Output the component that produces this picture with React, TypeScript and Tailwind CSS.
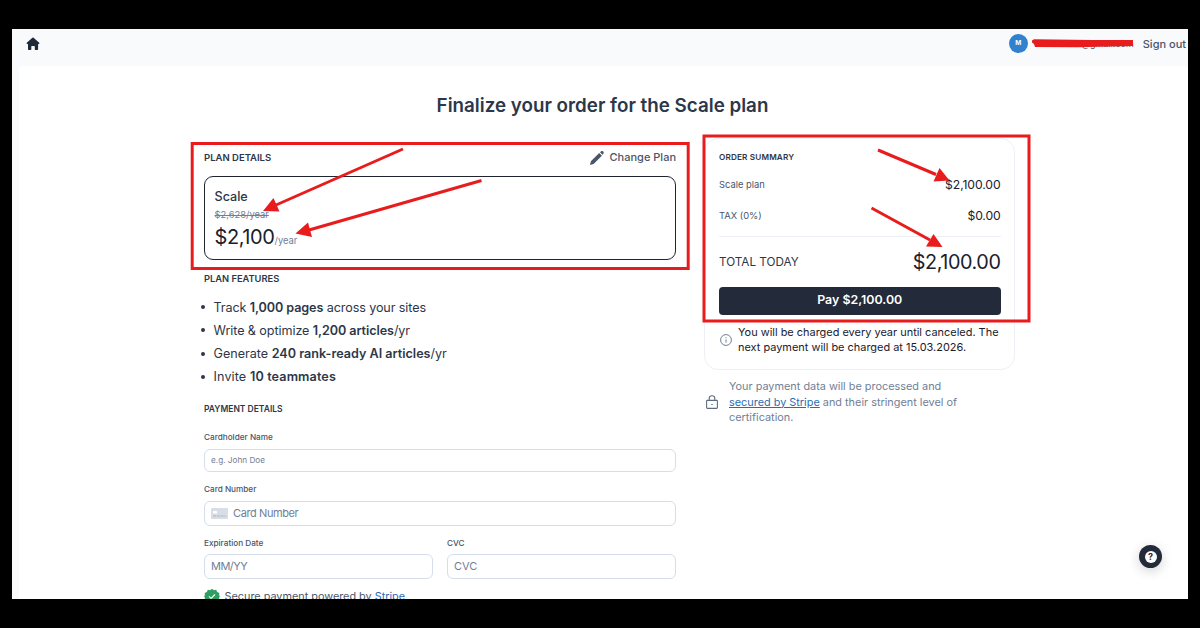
import type { ReactNode } from "react";

const features: { before: string; strong: string; after: string; tracking: string }[] = [
  { before: "Track ", strong: "1,000 pages", after: " across your sites", tracking: "tracking-[-0.1px]" },
  { before: "Write & optimize ", strong: "1,200 articles", after: "/yr", tracking: "tracking-[-0.08px]" },
  { before: "Generate ", strong: "240 rank-ready AI articles", after: "/yr", tracking: "tracking-normal" },
  { before: "Invite ", strong: "10 teammates", after: "", tracking: "tracking-[0.12px]" },
];

function Label({ children }: { children: ReactNode }) {
  return <div className="h-3 text-[8.2px] leading-3 font-medium text-[#4a5568]">{children}</div>;
}

function Header() {
  return (
    <header className="flex h-[37px] shrink-0 items-start pl-[14px] pr-[2px]">
      <svg viewBox="0 0 14 14" className="mt-2 size-[14px]" fill="#1f2937">
        <path d="M6.4.8a.9.9 0 0 1 1.2 0l5.600 5c.5.5.2 1.200-.4 1.200h-.7v5.100c0 .6-.4 1-1 1H9.300c-.3 0-.5-.2-.5-.5V9.500c0-.3-.2-.5-.5-.5H5.800c-.3 0-.5.2-.5.5v3.100c0 .3-.2.5-.5.5H3c-.6 0-1-.4-1-1V7h-.8C.6 7 .3 6.300.8 5.800z" />
      </svg>
      <div className="ml-auto flex items-center pt-[5px]">
        <span className="flex size-[19px] items-center justify-center rounded-full bg-[#3182ce] text-[6.5px] font-bold text-white">M</span>
        <span className="relative ml-[4px] flex h-[19px] w-[102px] items-center justify-end">
          <span className="text-[9px] text-[#4a5568]">@gmail.com</span>
          <svg viewBox="0 0 102 19" className="absolute inset-0 h-[19px] w-[102px]">
            <path d="M0 6.500 2 5.200 60 6 101 6 101 12 76 12.500 45 13.300 3 13 2 10 0 8.500z" fill="#e81c1c" />
          </svg>
        </span>
        <span className="ml-[9px] pt-[2px] text-[11px] leading-[17px] font-medium whitespace-nowrap text-[#4a5568]">Sign out</span>
      </div>
    </header>
  );
}

function PlanCard() {
  return (
    <section>
      <div className="flex h-5 items-center justify-between">
        <h2 className="pt-px text-[9.500px] leading-3 font-semibold text-[#2d3748]">PLAN DETAILS</h2>
        <div className="flex items-center gap-[6px] pt-px text-[11px] font-medium text-[#4a5568]">
          <svg viewBox="0 0 14 14" className="size-[14px]" fill="currentColor">
            <path d="M0 14 .9 10.200 9.200 2.100 11.900 4.800 3.600 12.900zM10 1.300 10.900.5c.7-.6 1.500-.6 2.200 0 .8.8.8 1.600.1 2.400l-.7.9z" />
          </svg>
          Change Plan
        </div>
      </div>
      <div className="mt-[9px] h-[84px] rounded-[9px] border-[1.5px] border-[#1f2430] pt-[11.5px] pl-[9.5px]">
        <div className="text-[12.6px] leading-4 font-medium text-[#2d3748]">Scale</div>
        <div className="mt-[2px] text-[9.4px] leading-4 text-[#718096] line-through">$2,628/year</div>
        <div className="mt-px flex items-baseline leading-[26px]">
          <span className="text-[20px] font-normal tracking-[-0.4px] text-[#1a202c]">$2,100</span>
          <span className="text-[9.400px] text-[#718096]">/year</span>
        </div>
      </div>
    </section>
  );
}

function PaymentForm() {
  const field = "flex items-center rounded-[6px] border border-[#d5deea] pl-[6px] text-[#718096]";
  return (
    <section className="mt-[14px]">
      <h2 className="text-[8.500px] leading-3 font-semibold text-[#2d3748]">PAYMENT DETAILS</h2>
      <div className="mt-[16px]">
        <Label>Cardholder Name</Label>
        <div className={`${field} mt-[6px] h-[23px] text-[8.2px]`}>e.g. John Doe</div>
      </div>
      <div className="mt-[11px]">
        <Label>Card Number</Label>
        <div className={`${field} mt-[6px] h-[25px] gap-[5px] text-[11px] tracking-[-0.4px]`}>
          <svg viewBox="0 0 17 11" className="h-[11px] w-[17px]">
            <rect width="17" height="11" rx="1" fill="#d9dde6" />
            <rect x="2" y="3" width="4" height="2.500" rx=".5" fill="#fff" />
            <path d="M2 8h13" stroke="#aeb5c3" strokeDasharray="3 .8" />
          </svg>
          Card Number
        </div>
      </div>
      <div className="mt-[11px] grid grid-cols-2 gap-[14px]">
        <div>
          <Label>Expiration Date</Label>
          <div className={`${field} mt-[5px] h-[25px] text-[11px] tracking-[-0.5px]`}>MM/YY</div>
        </div>
        <div>
          <Label>CVC</Label>
          <div className={`${field} mt-[5px] h-[25px] text-[11px]`}>CVC</div>
        </div>
      </div>
      <div className="mt-[9px] flex h-4 items-center gap-[5px] text-[10.850px] text-[#4a5568]">
        <svg viewBox="0 0 24 24" className="-ml-[0.5px] size-4">
          <path
            d="M12 1l2.800 2.200 3.500-.4 1.400 3.300 3.300 1.400-.4 3.500L24 12l-1.400 2.800.4 3.200-3.300 1.400-1.400 3.300-3.500-.4L12 24l-2.800-1.700-3.500.4-1.400-3.300L1 18l.4-3.200L0 12l1.400-1L1 7.500l3.300-1.400 1.400-3.300 3.500.4z"
            fill="#2f9e63"
          />
          <path d="M7.500 12.500l3.200 3 5.800-6" fill="none" stroke="#fff" strokeWidth="1.800" />
        </svg>
        <span className="pt-px">
          Secure payment powered by <a className="text-[#2b6cb0]">Stripe</a>
        </span>
      </div>
    </section>
  );
}

function OrderSummary() {
  return (
    <section className="h-[232px] rounded-[14px] border border-[#edf0f6] pt-[12px] pr-[13.5px] pl-[14px]">
      <h2 className="text-[8.2px] leading-3 font-semibold tracking-[0.15px] text-[#2d3748]">ORDER SUMMARY</h2>
      <div className="mt-[14px] flex h-4 items-center justify-between text-[#4a5568]">
        <span className="text-[9.4px]">Scale plan</span>
        <span className="text-[12.200px] tracking-[-0.1px] text-[#1a202c]">$2,100.00</span>
      </div>
      <div className="mt-[15px] flex h-4 items-center justify-between text-[#4a5568]">
        <span className="text-[9.4px]">TAX (0%)</span>
        <span className="text-[12.200px] tracking-[-0.15px] text-[#1a202c]">$0.00</span>
      </div>
      <div className="mt-3 h-px bg-[#edf0f6]" />
      <div className="mt-[14px] flex h-6 items-center justify-between">
        <span className="text-[11.700px] text-[#2d3748]">TOTAL TODAY</span>
        <span className="text-[19.800px] tracking-[-0.4px] text-[#1a202c]">$2,100.00</span>
      </div>
      <button className="mt-[11.500px] flex h-7 w-full items-center justify-center rounded-[4px] bg-[#232a3a] text-[12.400px] font-semibold text-white">
        Pay $2,100.00
      </button>
      <div className="mt-[10px] flex items-center gap-[6px] pl-[1px] text-[10.950px] leading-[15.500px] text-[#1a202c]">
        <svg viewBox="0 0 12 12" className="-mt-px size-3 shrink-0" fill="none" stroke="#718096">
          <circle cx="6" cy="6" r="5.400" />
          <path d="M6 5.400v3.200M6 3.200v1" />
        </svg>
        <p className="whitespace-nowrap">
          You will be charged every year until canceled. The
          <br />
          next payment will be charged at 15.03.2026.
        </p>
      </div>
    </section>
  );
}

function Annotations() {
  return (
    <svg viewBox="0 0 1200 628" className="pointer-events-none absolute inset-0 h-[628px] w-[1200px]" fill="none" stroke="#e81c1c" strokeWidth="3">
      <rect x="192.200" y="143.500" width="496" height="125" />
      <rect x="704" y="136" width="325" height="185" />
      <path d="M403 149 276 205M481.500 180.500 309 230M878 150 936 174.500M871.500 208 930 240" />
      <g fill="#e81c1c" stroke="none">
        <path d="M263 211 273.500 198 279.500 211.500z" />
        <path d="M295.500 233.500 308 222.500 312 237z" />
        <path d="M949.500 180.500 939.500 168 933.500 181.500z" />
        <path d="M942.500 247 933.500 234 926 246.500z" />
      </g>
    </svg>
  );
}

export default function App() {
  return (
    <div className="relative h-[628px] w-[1200px] overflow-hidden bg-black px-3 pt-[29px] font-[Inter,sans-serif]">
      <div className="relative flex h-[570px] flex-col overflow-hidden bg-[#f8fafc]">
        <Header />
        <main className="ml-[7px] h-[533px] rounded-t-[4px] bg-white pt-[27px]">
          <h1 className="pr-[2px] text-center text-[18.800px] leading-[26px] font-semibold text-[#2d3748]">Finalize your order for the Scale plan</h1>
          <div className="flex items-start gap-[28px] pl-[185px]">
            <div className="w-[472px] pt-[28px]">
              <PlanCard />
              <section className="mt-[13px]">
                <h2 className="text-[9.300px] leading-3 font-semibold text-[#2d3748]">PLAN FEATURES</h2>
                <ul className="mt-[10.500px] text-[12.600px] leading-[23.300px] text-[#2d3748]">
                  {features.map((f) => (
                    <li key={f.strong} className="flex items-center">
                      <span className="mr-[8.500px] -ml-[3px] size-1 rounded-full bg-[#2d3748]" />
                      <span className={f.tracking}>
                        {f.before}
                        <strong className="font-semibold">{f.strong}</strong>
                        {f.after}
                      </span>
                    </li>
                  ))}
                </ul>
              </section>
              <PaymentForm />
            </div>
            <div className="w-[311px] pt-[19px]">
              <OrderSummary />
              <div className="mt-[9px] flex items-center gap-[11px] pl-[2px] text-[10.880px] leading-[15.700px] text-[#718096]">
                <svg viewBox="0 0 12 14" className="-mt-[2px] h-[14px] w-3 shrink-0" fill="none" stroke="#5f6b7f" strokeWidth="1.100">
                  <rect x=".6" y="5.400" width="10.800" height="8" rx=".8" />
                  <path d="M3.200 5.400V3.200a2.800 2.500 0 0 1 5.600 0v2.200M5.300 9.500h1.400" />
                </svg>
                <p className="whitespace-nowrap">
                  Your payment data will be processed and
                  <br />
                  <a className="text-[#2b6cb0] underline">secured by Stripe</a> and their stringent level of
                  <br />
                  certification.
                </p>
              </div>
            </div>
          </div>
        </main>
        <button className="absolute right-[26px] bottom-[31px] flex size-[23px] items-center justify-center rounded-full bg-[#232a3a] shadow-[0_3px_12px_rgba(0,0,0,0.18)]">
          <span className="flex size-3 items-center justify-center rounded-full bg-white text-[9px] leading-none font-bold text-[#232a3a]">?</span>
        </button>
      </div>
      <Annotations />
    </div>
  );
}
